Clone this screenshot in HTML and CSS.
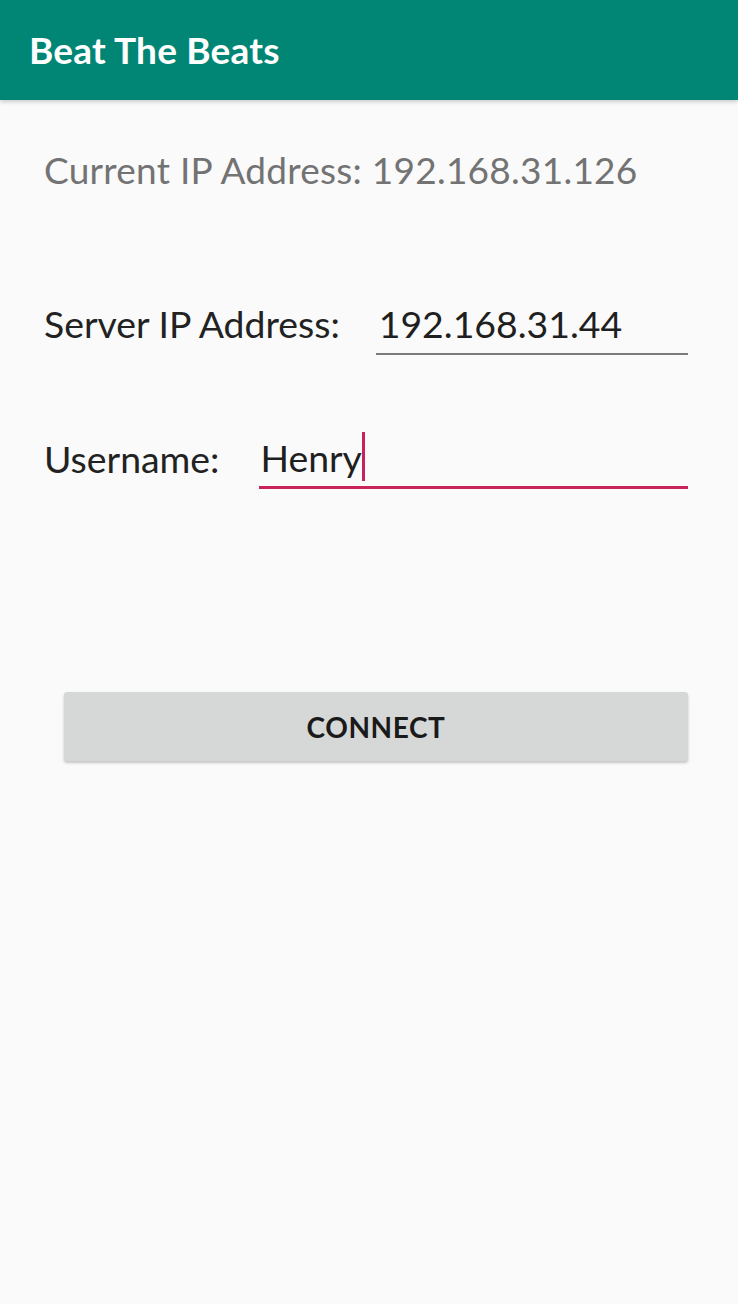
FILE: index.html
```html
<!DOCTYPE html>
<html>
<head>
<meta charset="utf-8">
<link rel="stylesheet" href="styles.css">
</head>
<body>
<header class="appbar"><h1 class="title">Beat The Beats</h1></header>
<main class="content">
  <p class="current">Current IP Address: 192.168.31.126</p>
  <div class="row row-server">
    <span class="label">Server IP Address:</span>
    <div class="field field-server"><span class="value">192.168.31.44</span></div>
  </div>
  <div class="row row-user">
    <span class="label">Username:</span>
    <div class="field field-user"><span class="value">Henry</span><span class="cursor"></span></div>
  </div>
  <div class="btn-wrap"><button class="btn">CONNECT</button></div>
</main>
</body>
</html>
```
FILE: styles.css
```css
html, body { margin: 0; padding: 0; }
body {
  background: #fafafa;
  width: 738px;
  height: 1304px;
  font-family: Lato, "Open Sans", sans-serif;
  overflow: hidden;
}
.appbar {
  height: 100px;
  background: #018676;
  display: flex;
  align-items: center;
  padding-left: 29px;
  box-shadow: 0 2px 4px rgba(0,0,0,0.18);
}
.title {
  margin: 0;
  color: #fff;
  font-size: 37px;
  font-weight: 700;
  line-height: 1;
  letter-spacing: 0.2px;
  padding-bottom: 2px;
}
.content { padding: 0 50px 0 44px; }
.current {
  margin: 0;
  padding-top: 50px;
  font-size: 37px;
  line-height: 40px;
  letter-spacing: 0.25px;
  color: #737373;
}
.row {
  display: flex;
  align-items: flex-end;
}
.label {
  font-size: 37.4px;
  color: #222;
  line-height: 40px;
}
.row-server { margin-top: 113px; }
.row-user { margin-top: 91px; }
.field {
  flex: 1;
  display: flex;
  align-items: flex-end;
}
.field-server {
  margin-left: 36px;
  border-bottom: 2px solid #7a7a7a;
  height: 50px;
  margin-bottom: -11px;
}
.field-user {
  margin-left: 40px;
  border-bottom: 3px solid #c8215c;
  height: 51px;
  margin-bottom: -10px;
}
.value {
  font-size: 37.4px;
  line-height: 40px;
  color: #1f1f1f;
  padding-left: 3px;
  margin-bottom: 9px;
}
.field-user .value { padding-left: 1px; margin-bottom: 8px; }
.cursor {
  width: 3px;
  height: 49px;
  background: #c8215c;
  margin-bottom: 5px;
  align-self: flex-end;
}
.btn-wrap { padding-left: 20px; margin-top: 213px; }
.btn {
  display: block;
  width: 100%;
  height: 69px;
  border: none;
  border-radius: 3px;
  background: #d6d7d7;
  box-shadow: 0 2px 3px rgba(0,0,0,0.22);
  font-family: Lato, sans-serif;
  font-weight: 700;
  font-size: 28px;
  color: #1a1a1a;
  letter-spacing: 0.6px;
}
```
